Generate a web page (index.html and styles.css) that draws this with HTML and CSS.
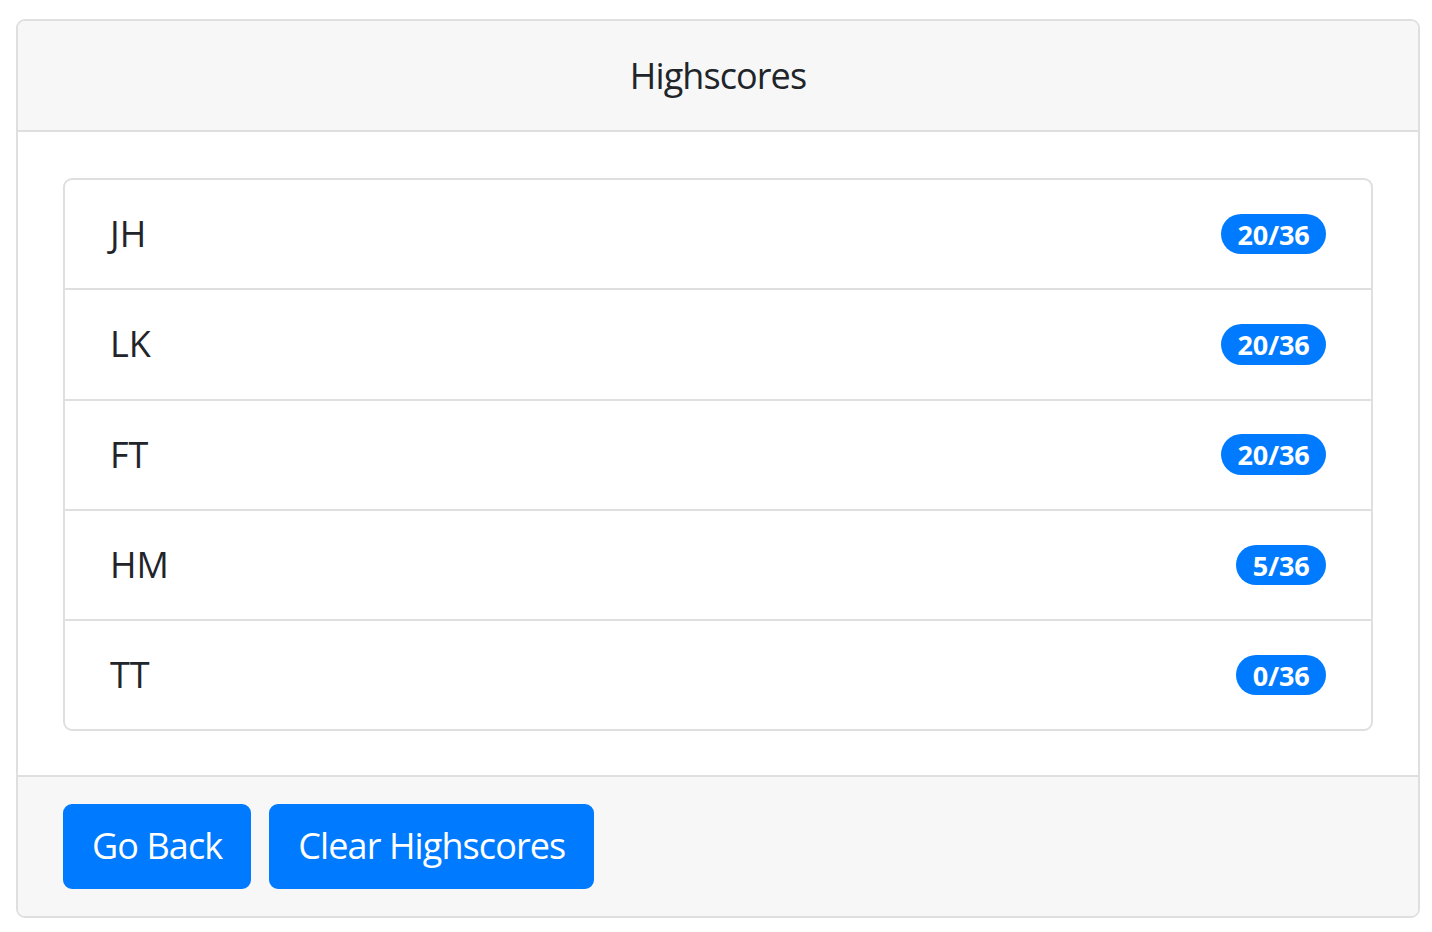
FILE: index.html
```html
<!DOCTYPE html>
<html lang="en">
<head>
<meta charset="utf-8">
<title>Highscores</title>
<link rel="stylesheet" href="styles.css">
</head>
<body>
<div class="page">
  <div class="card">
    <div class="card-header">Highscores</div>
    <div class="card-body">
      <ul class="list-group">
        <li class="list-group-item"><span>JH</span><span class="badge">20/36</span></li>
        <li class="list-group-item"><span>LK</span><span class="badge">20/36</span></li>
        <li class="list-group-item"><span>FT</span><span class="badge">20/36</span></li>
        <li class="list-group-item"><span>HM</span><span class="badge">5/36</span></li>
        <li class="list-group-item"><span>TT</span><span class="badge">0/36</span></li>
      </ul>
    </div>
    <div class="card-footer">
      <button class="btn">Go Back</button>
      <button class="btn">Clear Highscores</button>
    </div>
  </div>
</div>
</body>
</html>
```

FILE: styles.css
```css
* { box-sizing: border-box; }
html, body { margin: 0; padding: 0; background: #fff; }
body {
  font-family: "Open Sans", "Noto Sans", "Liberation Sans", sans-serif;
  font-size: 36px;
  line-height: 1.5;
  color: #212529;
}
.page {
  padding: 19px 12px 13px 16px;
}
.card {
  border: 2px solid #dfdfdf;
  border-radius: 9px;
  background: #fff;
  overflow: hidden;
}
.card-header {
  background: #f7f7f7;
  border-bottom: 2px solid #dfdfdf;
  padding: 28px 45px 27px;
  text-align: center;
  line-height: 54px;
  letter-spacing: -0.9px;
}
.card-body {
  padding: 46px 45px 44px;
}
.list-group {
  list-style: none;
  margin: 0;
  padding: 0;
  border: 2px solid #dfdfdf;
  border-radius: 9px;
}
.list-group-item {
  display: flex;
  justify-content: space-between;
  align-items: center;
  padding: 27px 45px;
  line-height: 54px;
  height: 110.25px;
}
.list-group-item + .list-group-item {
  border-top: 2px solid #dfdfdf;
}
.list-group-item:first-child { height: 108.25px; }
.item-name { letter-spacing: -0.5px; }
.badge {
  display: inline-block;
  background: #007bff;
  color: #fff;
  font-weight: 700;
  font-size: 27px;
  line-height: 1;
  padding: 7px 16.5px 6.5px;
  border-radius: 100px;
  letter-spacing: -0.2px;
}
.card-footer {
  background: #f7f7f7;
  border-top: 2px solid #dfdfdf;
  padding: 26.5px 45px 27px;
  display: flex;
  gap: 18px;
}
.btn {
  font-family: inherit;
  font-size: 36px;
  line-height: 54px;
  color: #fff;
  background: #007bff;
  border: 2px solid #007bff;
  border-radius: 9px;
  padding: 13.5px 27px;
  margin: 0;
  letter-spacing: -0.9px;
  cursor: pointer;
}
```
